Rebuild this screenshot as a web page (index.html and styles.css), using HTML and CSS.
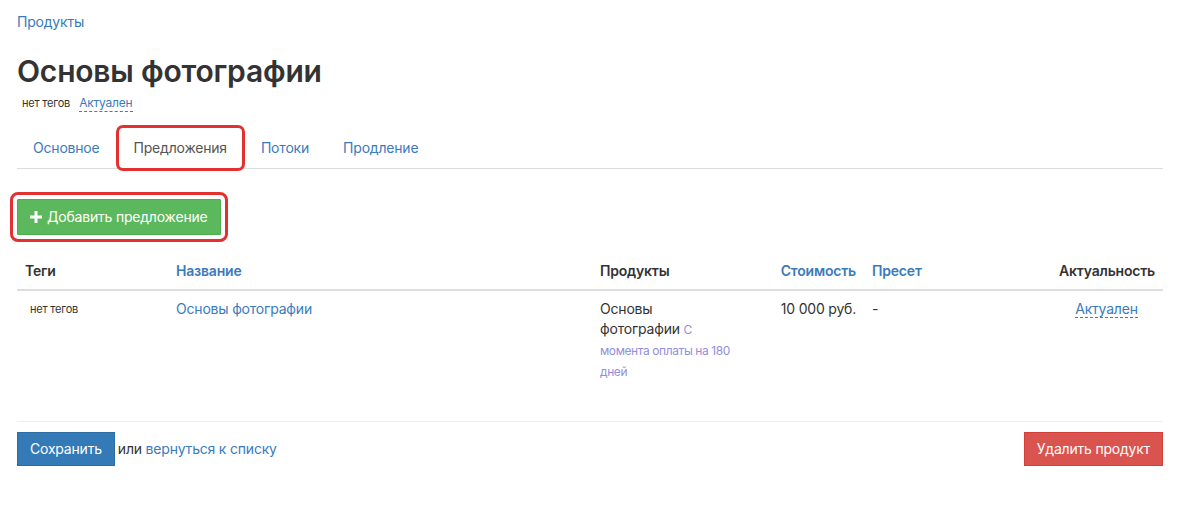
FILE: index.html
```html
<!DOCTYPE html>
<html>

<head>
  <title>Основы фотографии</title>
  <link rel="stylesheet" href="styles.css">
</head>

<body>
  <div class="page">
    <div class="breadcrumb"><a href="#">Продукты</a></div>

    <h1 class="title">Основы фотографии</h1>
    <div class="titleMeta">
      <span class="noTags">нет тегов</span>
      <a href="#" class="dotted">Актуален</a>
    </div>

    <ul class="tabs">
      <li><a href="#">Основное</a></li>
      <li class="active marked"><a href="#">Предложения</a></li>
      <li><a href="#">Потоки</a></li>
      <li><a href="#">Продление</a></li>
    </ul>

    <div class="toolbar">
      <button class="btn btnGreen marked">
        <svg class="plus" viewBox="0 0 12 12" width="12" height="12">
          <path d="M4.5 0h3v4.5H12v3H7.5V12h-3V7.5H0v-3h4.5z" fill="#fff" />
        </svg>
        Добавить предложение
      </button>
    </div>

    <table class="offers">
      <colgroup>
        <col style="width: 151px">
        <col style="width: 424px">
        <col style="width: 150px">
        <col style="width: 122px">
        <col style="width: 186px">
        <col style="width: 113px">
      </colgroup>
      <thead>
        <tr>
          <th>Теги</th>
          <th><a href="#">Название</a></th>
          <th>Продукты</th>
          <th class="right"><a href="#">Стоимость</a></th>
          <th><a href="#">Пресет</a></th>
          <th class="right">Актуальность</th>
        </tr>
      </thead>
      <tbody>
        <tr>
          <td class="small">нет тегов</td>
          <td><a href="#">Основы фотографии</a></td>
          <td>Основы фотографии <span class="period">С момента оплаты на 180 дней</span></td>
          <td class="right">10 000 руб.</td>
          <td>-</td>
          <td class="center"><a href="#" class="dotted">Актуален</a></td>
        </tr>
      </tbody>
    </table>

    <div class="footer">
      <div class="footerLeft">
        <button class="btn btnBlue">Сохранить</button>
        <span class="or">или <a href="#">вернуться к списку</a></span>
      </div>
      <button class="btn btnRed">Удалить продукт</button>
    </div>
  </div>
</body>

</html>
```

FILE: styles.css
```css
body {
  margin: 0;
  font-family: Inter, "Noto Sans", "Liberation Sans", sans-serif;
  font-size: 14px;
  line-height: 20px;
  letter-spacing: -0.2px;
  color: #333;
  background: #fff;
}

a {
  color: #3a7bbd;
  text-decoration: none;
}

.page {
  padding: 12px 37px 0 17px;
}

.breadcrumb {
  height: 20px;
}

.title {
  margin: 22px 0 0;
  font-size: 30px;
  line-height: 34px;
  font-weight: 600;
  letter-spacing: -0.2px;
}

.titleMeta {
  margin-top: 5px;
  height: 20px;
  display: flex;
  align-items: center;
  gap: 9px;
}

.noTags {
  font-size: 11px;
  padding-left: 5px;
}

.titleMeta .dotted {
  font-size: 12px;
}

.dotted {
  border-bottom: 1px dashed #3a7bbd;
  line-height: 16px;
}

/* tabs */
.tabs {
  list-style: none;
  margin: 14px 0 0;
  padding: 0;
  display: flex;
  border-bottom: 1px solid #ddd;
}

.tabs li {
  margin-bottom: -1px;
}

.tabs a {
  display: block;
  padding: 10px 15px;
  border: 1px solid transparent;
  border-radius: 4px 4px 0 0;
  margin-right: 2px;
}

.tabs .active a {
  color: #555;
  background: #fff;
  border-color: #ddd #ddd transparent;
}

.tabs .marked a {
  outline: 3px solid #e2312f;
  outline-offset: -1px;
  border-radius: 5px;
}

/* buttons */
.toolbar {
  padding: 30px 0 18px;
}

.btn {
  font-family: inherit;
  font-size: 14px;
  line-height: 20px;
  letter-spacing: -0.2px;
  padding: 6px 12px;
  border: 1px solid transparent;
  border-radius: 0;
  color: #fff;
  cursor: pointer;
}

.btnGreen {
  background: #5cb85c;
  border-color: #4cae4c;
  padding: 7px 12px;
  display: flex;
  align-items: center;
  gap: 5px;
}

.btnGreen.marked {
  outline: 3px solid #e2312f;
  outline-offset: 4px;
  border-radius: 1px;
}

.btnBlue {
  background: #337ab7;
  border-color: #2e6da4;
}

.btnRed {
  background: #d9534f;
  border-color: #d43f3a;
}

/* table */
.offers {
  width: 1146px;
  border-collapse: collapse;
  table-layout: fixed;
}

.offers th,
.offers td {
  padding: 8px;
  text-align: left;
  vertical-align: top;
}

.offers th {
  font-weight: 600;
  border-bottom: 2px solid #ddd;
}

.offers .right {
  text-align: right;
}

.offers .center {
  text-align: center;
}

.offers td.small {
  font-size: 11px;
  padding-left: 13px;
}

.period {
  font-size: 12px;
  letter-spacing: -0.4px;
  color: #9190dc;
}

.footer {
  margin-top: 31px;
  border-top: 1px solid #eee;
  padding-top: 10px;
  width: 1146px;
  display: flex;
  justify-content: space-between;
}

.footerLeft {
  display: flex;
  align-items: center;
  gap: 3px;
}
```
